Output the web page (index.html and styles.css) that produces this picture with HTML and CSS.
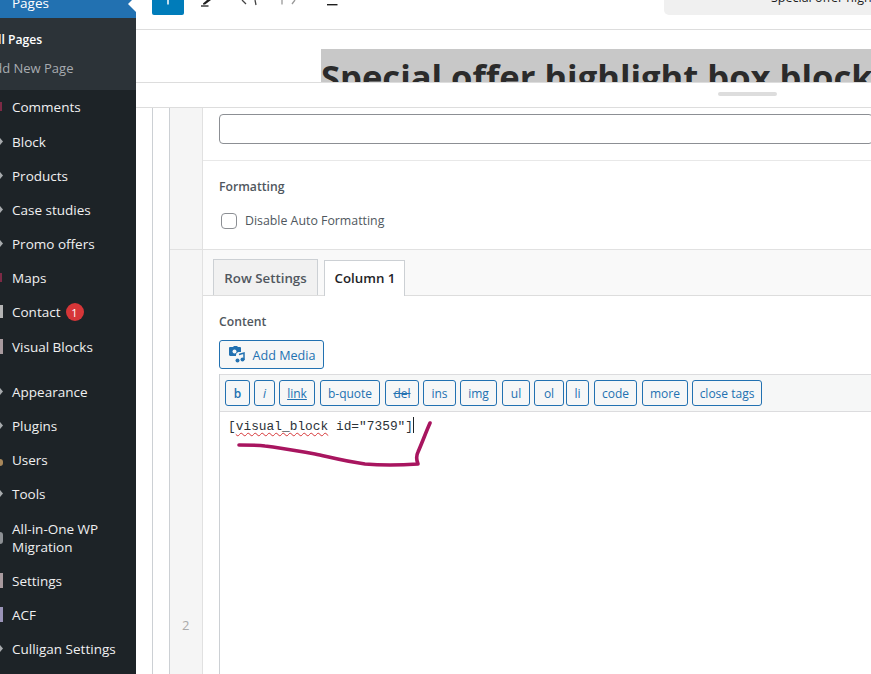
FILE: index.html
```html
<!DOCTYPE html>
<html lang="en">
<head>
<meta charset="utf-8">
<title>Edit Page</title>
<link rel="stylesheet" href="styles.css">
</head>
<body>
<aside class="sidebar">
  <a class="item current"><span class="label">Pages</span><i class="notch"></i></a>
  <div class="submenu">
    <a class="sub on">All Pages</a>
    <a class="sub">Add New Page</a>
  </div>
  <nav class="menu">
    <a class="item wide"><i class="ico ico-red"></i><span class="label">Comments</span></a>
    <a class="item"><i class="ico ico-tip"></i><span class="label">Block</span></a>
    <a class="item"><i class="ico ico-tip"></i><span class="label">Products</span></a>
    <a class="item"><i class="ico ico-tip"></i><span class="label">Case studies</span></a>
    <a class="item"><i class="ico ico-tip"></i><span class="label">Promo offers</span></a>
    <a class="item"><i class="ico ico-red"></i><span class="label">Maps</span></a>
    <a class="item wide"><i class="ico ico-bar"></i><span class="label">Contact</span><b class="badge">1</b></a>
    <a class="item"><i class="ico ico-bar ico-rose"></i><span class="label">Visual Blocks</span></a>
    <a class="item gap"><i class="ico ico-tip"></i><span class="label">Appearance</span></a>
    <a class="item"><i class="ico ico-tip"></i><span class="label">Plugins</span></a>
    <a class="item"><i class="ico ico-tan"></i><span class="label">Users</span></a>
    <a class="item wide"><i class="ico ico-tip"></i><span class="label">Tools</span></a>
    <a class="item two"><i class="ico ico-round"></i><span class="label">All-in-One WP Migration</span></a>
    <a class="item"><i class="ico ico-bar ico-rose"></i><span class="label">Settings</span></a>
    <a class="item"><i class="ico ico-acf"></i><span class="label">ACF</span></a>
    <a class="item"><i class="ico ico-tip"></i><span class="label">Culligan Settings</span></a>
  </nav>
</aside>
<main class="main">
  <header class="toolbar">
    <span class="add"><svg width="14" height="14" viewBox="0 0 14 14"><path d="M7 0v4.500" stroke="#fff" stroke-width="1.500"/></svg></span>
    <svg class="tool pencil" width="14" height="14" viewBox="0 0 14 14"><path d="M2 3.500L6 0h4L4 4.500H2z" fill="#1e1e1e"/><path d="M0 6h7.500" stroke="#1e1e1e" stroke-width="1.300"/></svg>
    <svg class="tool undo" width="20" height="14" viewBox="0 0 20 14"><path d="M2 0l4 4M15 0l1 5" stroke="#444" stroke-width="1.300" fill="none"/></svg>
    <svg class="tool redo" width="20" height="14" viewBox="0 0 20 14"><path d="M2 0v4.500M15 0l-3 4" stroke="#999" stroke-width="1.300" fill="none"/></svg>
    <svg class="tool list" width="12" height="14" viewBox="0 0 12 14"><path d="M0 4.700h10.500" stroke="#1e1e1e" stroke-width="1.400"/></svg>
    <div class="search"><span>Special offer highlight box block</span></div>
  </header>
  <section class="title-area"><h1 class="title">Special offer highlight box block</h1></section>
  <div class="resizer"><span class="handle"></span></div>
  <section class="fields">
    <div class="gutter"></div>
    <div class="table">
      <div class="row-num upper"></div>
      <div class="row-body upper-body">
        <div class="text-input"></div>
        <div class="formatting">
          <div class="field-label">Formatting</div>
          <label class="check"><span class="box"></span>Disable Auto Formatting</label>
        </div>
      </div>
      <div class="row-num lower"><span class="num">2</span></div>
      <div class="row-body lower-body">
        <div class="tabs">
          <span class="tab row-tab">Row Settings</span>
          <span class="tab active">Column 1</span>
        </div>
        <div class="content">
          <div class="field-label content-label">Content</div>
          <button class="media"><svg width="18" height="17" viewBox="0 0 18 17"><path d="M2 1h3l1-1h3l1 1h2a1 1 0 0 1 1 1v4h-2.500a3 3 0 0 0-2.500 3v1H2a2 2 0 0 1-1-1V2a1 1 0 0 1 1-1z" fill="#2271b1"/><circle cx="6.500" cy="5.500" r="2" fill="#f6f7f7"/><path d="M11 8.500l5-1.500v7" stroke="#2271b1" stroke-width="1.500" fill="none"/><circle cx="9.500" cy="14.500" r="2" fill="#2271b1"/><circle cx="14.500" cy="13.500" r="2" fill="#2271b1"/></svg><span class="media-text">Add Media</span></button>
          <div class="editor">
            <div class="quicktags">
              <span class="qt b">b</span>
              <span class="qt i">i</span>
              <span class="qt link">link</span>
              <span class="qt quote">b-quote</span>
              <span class="qt del">del</span>
              <span class="qt ins">ins</span>
              <span class="qt img">img</span>
              <span class="qt ul">ul</span>
              <span class="qt ol">ol</span>
              <span class="qt li">li</span>
              <span class="qt code">code</span>
              <span class="qt more">more</span>
              <span class="qt close">close tags</span>
            </div>
            <div class="textarea">[<span class="typo">visual_block</span> id="7359"]<i class="caret"></i>
              <svg class="scribble" width="210" height="60" viewBox="0 0 210 60"><path d="M11 28C22 28 30 28 37 29C55 31 70 34 87 37C105 41 120 45 137 47C155 48.500 175 48 190 47C188 42 188 39 190 35C194 26 198 15 202 6" fill="none" stroke="#a8155f" stroke-width="3.600" stroke-linecap="round" stroke-linejoin="round"/></svg>
            </div>
          </div>
        </div>
      </div>
    </div>
  </section>
</main>
</body>
</html>
```
FILE: styles.css
```css
* { box-sizing: border-box; }
html, body { margin: 0; height: 100%; overflow: hidden; }
body {
  display: flex;
  width: 871px;
  height: 674px;
  background: #fff;
  font-family: "Open Sans", "Noto Sans", "Liberation Sans", sans-serif;
  font-size: 13px;
  color: #3c434a;
}

/* sidebar */
.sidebar { width: 136px; flex: none; background: #1d2327; color: #f0f0f1; overflow: hidden; font-size: 13.500px; }
.item { display: flex; align-items: center; height: 34px; position: relative; padding-left: 12px; white-space: nowrap; }
.item .label { white-space: normal; line-height: 18px; }
.wide { margin-bottom: 1px; }
.current { height: 18px; background: #2271b1; color: #fff; align-items: flex-end; padding-bottom: 6px; }
.notch { position: absolute; right: 0; top: -4px; border: 8px solid transparent; border-right-color: #fff; border-left-width: 0; }
.submenu { height: 72px; background: #2c3338; padding-top: 9px; }
.sub { display: block; height: 28px; line-height: 26px; margin-left: -14px; color: #a7abb0; white-space: nowrap; font-size: 13px; }
.sub.on { color: #fff; font-weight: 600; margin-left: -10px; font-size: 12.200px; }
.gap { margin-top: 11px; }
.two { height: 52px; }
.ico { position: absolute; left: 0; top: 50%; }
.ico-tip { width: 3px; height: 7px; margin-top: -4px; background: #a7aaad; clip-path: polygon(0 0, 100% 50%, 0 100%); }
.ico-red { width: 2px; height: 9px; margin-top: -5px; background: #7c2a45; }
.ico-bar { width: 3px; height: 13px; margin-top: -7px; background: #b4b4b4; }
.ico-rose { background: #a89a9e; height: 15px; margin-top: -8px; }
.ico-tan { width: 3px; height: 7px; margin-top: -1px; background: #a8875a; border-radius: 0 3px 3px 0; }
.ico-round { width: 3px; height: 12px; margin-top: -6px; background: #8d9094; border-radius: 0 4px 4px 0; }
.ico-acf { width: 3px; height: 15px; margin-top: -8px; background: #9a94b8; }
.badge { display: inline-flex; align-items: center; justify-content: center; width: 18px; height: 18px; margin-left: 5px; border-radius: 50%; background: #d63638; color: #fff; font-size: 11px; font-weight: 400; }

/* main */
.main { flex: 1; min-width: 0; display: flex; flex-direction: column; overflow: hidden; }
.toolbar { height: 30px; flex: none; border-bottom: 1px solid #ddd; display: flex; align-items: flex-start; padding-left: 16px; position: relative; }
.add { width: 32px; height: 15px; background: #007cba; border-radius: 0 0 2px 2px; display: flex; justify-content: center; }
.tool { flex: none; }
.pencil { margin-left: 17px; }
.undo { margin-left: 25px; }
.redo { margin-left: 20px; }
.list { margin-left: 27px; }
.search { position: absolute; left: 528px; right: 0; top: 0; height: 15px; background: #f0f0f0; border-radius: 0 0 0 5px; overflow: hidden; }
.search span { position: absolute; left: 107px; top: -11px; font-size: 12.500px; color: #1e1e1e; white-space: nowrap; }
.title-area { height: 52px; flex: none; overflow: hidden; padding: 23px 0 0 185px; }
.title { margin: 0; display: inline; font-size: 34.600px; line-height: 48px; font-weight: 700; color: #2b2b2b; background: #c8c8c8; white-space: nowrap; padding: 4px 0; }
.resizer { height: 26px; flex: none; border-top: 1px solid #ddd; border-bottom: 1px solid #ddd; position: relative; }
.handle { position: absolute; left: 582px; top: 9px; width: 59px; height: 4px; border-radius: 2px; background: #ddd; }

.fields { flex: 1; display: flex; min-height: 0; padding-left: 16px; }
.gutter { width: 17px; flex: none; border-left: 1px solid #ccd0d4; }
.table { flex: 1; min-width: 0; display: grid; grid-template-columns: 33px 1fr; grid-template-rows: 141px 1fr; border-left: 1px solid #ccd0d4; }
.row-num { background: #f5f5f5; border-right: 1px solid #e1e1e1; position: relative; }
.lower { border-top: 1px solid #e1e1e1; }
.num { position: absolute; left: 12px; top: 366px; font-size: 13px; color: #aaa; line-height: 18px; }
.upper-body { min-width: 0; }
.lower-body { min-width: 0; display: flex; flex-direction: column; border-top: 1px solid #e1e1e1; }
.text-input { height: 30px; margin: 6px -2px 0 16px; border: 1px solid #8c8f94; border-radius: 4px; background: #fff; }
.formatting { margin-top: 16px; border-top: 1px solid #e8e8e8; padding: 16px 16px 0; }
.field-label { font-weight: 600; color: #50575e; font-size: 12.200px; line-height: 20px; }
.check { display: flex; align-items: center; margin-top: 14px; padding-left: 2px; font-size: 12.350px; line-height: 20px; color: #50575e; }
.box { width: 16px; height: 16px; margin-right: 8px; border: 1px solid #8c8f94; border-radius: 4px; background: #fff; flex: none; }
.tabs { height: 46px; flex: none; background: #f9f9f9; border-bottom: 1px solid #ddd; display: flex; align-items: flex-end; padding-left: 10px; gap: 5px; margin-bottom: -1px; }
.tab { width: 81px; height: 36px; display: flex; align-items: center; justify-content: center; border: 1px solid #ccd0d4; border-bottom: 0; background: #f1f1f1; color: #50575e; font-size: 13.300px; font-weight: 600; white-space: nowrap; }
.row-tab { width: 105px; margin-right: 1px; }
.tab.active { background: #fff; color: #1d2327; margin-bottom: -1px; padding: 0 0 1px 1px; }
.content { flex: 1; display: flex; flex-direction: column; padding: 18px 0 0 16px; min-height: 0; }
.content-label { line-height: 18px; }
.media { width: 105px; height: 29px; margin-top: 9px; padding: 0; border: 1px solid #2271b1; border-radius: 3px; background: #f6f7f7; color: #2271b1; font: inherit; font-size: 12.600px; display: flex; align-items: center; justify-content: center; gap: 7px; flex: none; }
.media-text { padding-top: 2px; }
.editor { flex: 1; margin-top: 5px; margin-right: -2px; border-left: 1px solid #ccd0d4; display: flex; flex-direction: column; min-height: 0; }
.quicktags { height: 38px; flex: none; display: flex; align-items: center; background: #f6f7f7; border-top: 1px solid #dcdcde; border-bottom: 1px solid #dcdcde; padding-left: 5px; gap: 4px; }
.qt { height: 26px; display: flex; align-items: center; justify-content: center; border: 1px solid #2271b1; border-radius: 3px; background: #f6f7f7; color: #2271b1; font-size: 12px; flex: none; }
.b { width: 25px; font-weight: 600; }
.i { width: 21px; font-style: italic; }
.link { width: 36px; text-decoration: underline; margin-right: 1px; }
.quote { width: 60px; margin-right: 1px; }
.del { width: 34px; text-decoration: line-through; }
.ins { width: 33px; }
.img { width: 37px; margin-right: 1px; }
.ul { width: 28px; }
.ol { width: 30px; margin-right: -2px; }
.li { width: 23px; margin-right: 1px; }
.code { width: 43px; margin-right: 1px; }
.more { width: 46px; }
.close { width: 70px; }
.textarea { flex: 1; position: relative; padding: 5px 0 0 8px; font-family: "Liberation Mono", monospace; font-size: 12.850px; line-height: 20px; color: #2c3338; white-space: nowrap; }
.typo { text-decoration: underline wavy #d63638 1px; text-underline-offset: 2px; }
.caret { display: inline-block; width: 1px; height: 16px; background: #1d2327; vertical-align: -3px; }
.scribble { position: absolute; left: 8px; top: 5px; }
```
